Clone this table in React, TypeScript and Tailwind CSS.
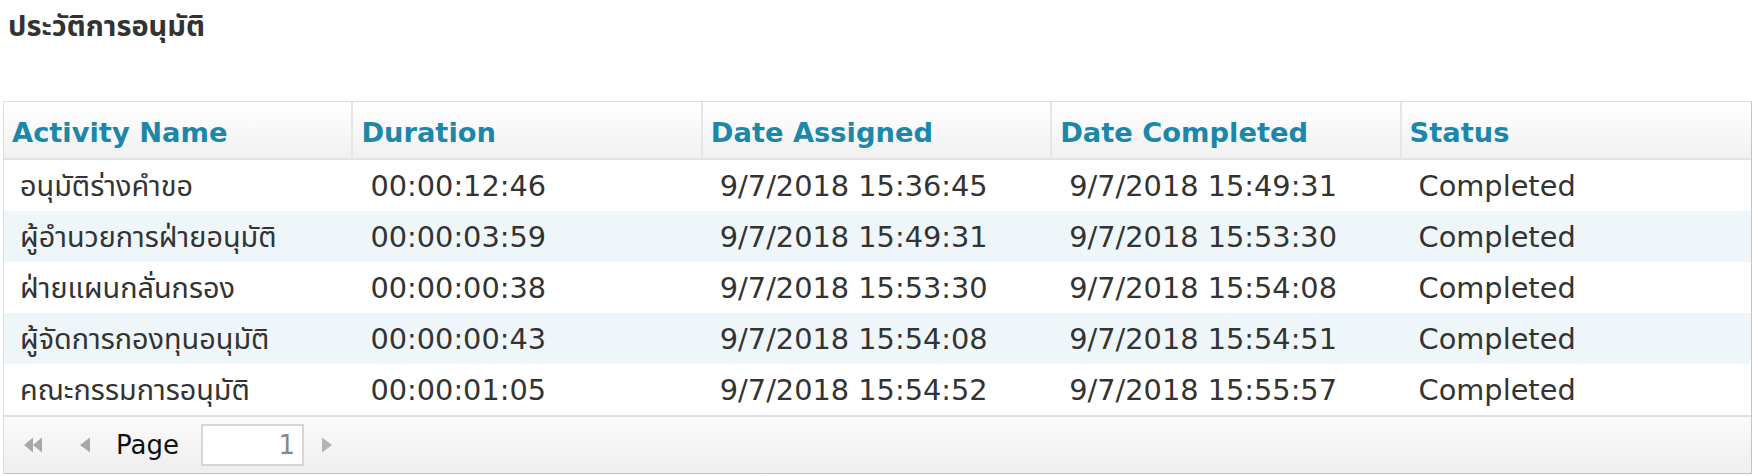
import React from "react";

const rows = [
  ["อนุมัติร่างคำขอ", "00:00:12:46", "9/7/2018 15:36:45", "9/7/2018 15:49:31", "Completed"],
  ["ผู้อำนวยการฝ่ายอนุมัติ", "00:00:03:59", "9/7/2018 15:49:31", "9/7/2018 15:53:30", "Completed"],
  ["ฝ่ายแผนกลั่นกรอง", "00:00:00:38", "9/7/2018 15:53:30", "9/7/2018 15:54:08", "Completed"],
  ["ผู้จัดการกองทุนอนุมัติ", "00:00:00:43", "9/7/2018 15:54:08", "9/7/2018 15:54:51", "Completed"],
  ["คณะกรรมการอนุมัติ", "00:00:01:05", "9/7/2018 15:54:52", "9/7/2018 15:55:57", "Completed"],
];

const headers = ["Activity Name", "Duration", "Date Assigned", "Date Completed", "Status"];

export default function App() {
  return (
    <div
      className="w-[1758px] h-[476px] bg-white overflow-hidden"
      style={{ fontFamily: '"DejaVu Sans", Tahoma, "Noto Sans Thai", "Noto Sans", sans-serif' }}
    >
      <div className="pl-[8px] pt-[4px] h-[101px]">
        <h1 className="text-[29px] font-bold text-[#333333] leading-[44px]">ประวัติการอนุมัติ</h1>
      </div>
      <div className="ml-[3px] w-[1749px] border border-t-[#dedede] border-l-[#dedede] border-r-[#c4c4c4] border-b-[#c4c4c4]">
        <div className="grid grid-cols-5 h-[58px] border-b-2 border-[#e2e2e2] bg-gradient-to-b from-[#ffffff] to-[#f1f1f1]">
          {headers.map((h, i) => (
            <div
              key={h}
              className={`flex items-center pl-[8px] pt-[6px] text-[27.3px] font-bold text-[#1b87a9] ${i < 4 ? "border-r-2 border-[#e6e6e6]" : ""}`}
            >
              {h}
            </div>
          ))}
        </div>
        {rows.map((r, ri) => (
          <div key={ri} className={`grid grid-cols-5 h-[51px] ${ri % 2 === 1 ? "bg-[#eff6fa]" : "bg-white"}`}>
            {r.map((c, ci) => (
              <div
                key={ci}
                className={`flex items-center pt-[3px] text-[28.8px] text-[#333333] whitespace-nowrap ${ci === 0 ? "pl-[16px]" : "pl-[17px]"}`}
              >
                {c}
              </div>
            ))}
          </div>
        ))}
        <div className="h-[58px] border-t-2 border-[#e0e0e0] bg-gradient-to-b from-[#fbfbfb] to-[#eeeeee] flex items-center">
          <svg className="ml-[19px]" width="21" height="18" viewBox="0 0 21 18">
            <polygon points="1,9 10,1.5 10,16.5" fill="#a8a8a8" />
            <polygon points="10,9 19,1.5 19,16.5" fill="#a8a8a8" />
          </svg>
          <svg className="ml-[35px]" width="12" height="18" viewBox="0 0 12 18">
            <polygon points="1,9 11,1.5 11,16.5" fill="#a8a8a8" />
          </svg>
          <span className="ml-[25px] text-[26px] text-[#111111]">Page</span>
          <div className="ml-[22px] w-[103px] h-[42px] border-2 border-[#d6d6d6] bg-white flex items-center justify-end pr-[7px] text-[26px] text-[#888888]">
            1
          </div>
          <svg className="ml-[17px]" width="12" height="18" viewBox="0 0 12 18">
            <polygon points="1,1.5 1,16.5 11,9" fill="#b4b4b4" />
          </svg>
        </div>
      </div>
    </div>
  );
}
